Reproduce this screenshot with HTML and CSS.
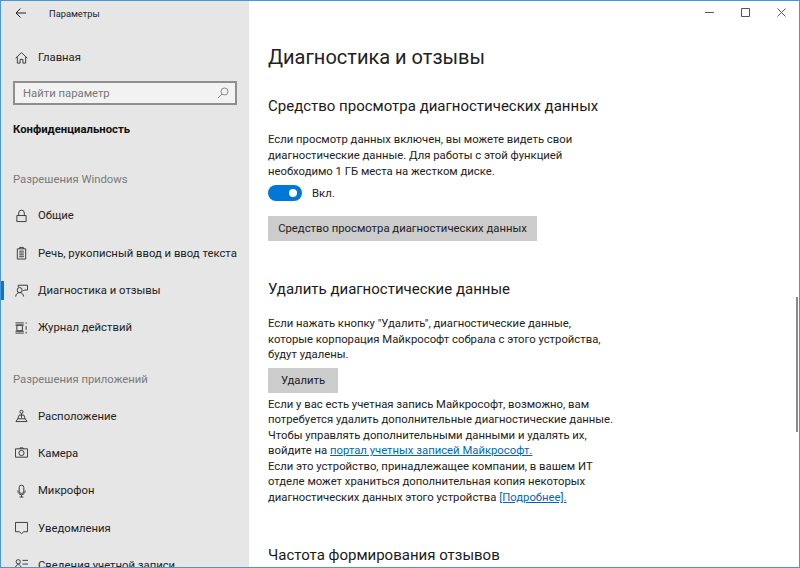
FILE: index.html
```html
<!DOCTYPE html>
<html lang="ru">
<head>
<meta charset="utf-8">
<title>Параметры</title>
<link rel="stylesheet" href="styles.css">
</head>
<body>
<div class="window">
  <aside class="sidebar">
    <div class="titlebar">
      <svg class="back" viewBox="0 0 12 12"><path d="M11 6H1M5.500 1.500 1 6l4.500 4.500"/></svg>
      <span class="app-title">Параметры</span>
    </div>
    <a class="nav-item home">
      <svg class="icon" viewBox="0 0 14 14"><path d="M.7 7.200 7 1.200l6.300 6M2.500 5.800v6.700h3V8.500h3v4h3V5.800"/></svg>
      <span>Главная</span>
    </a>
    <div class="search"><span>Найти параметр</span>
      <svg class="search-icon" viewBox="0 0 12 12"><circle cx="7.500" cy="4.500" r="3.500"/><path d="M5 7 1 11"/></svg>
    </div>
    <div class="category">Конфиденциальность</div>
    <div class="group first">Разрешения Windows</div>
    <a class="nav-item">
      <svg class="icon" viewBox="0 0 14 14"><path d="M2 6.500h10v6.500H2zM4 6.500V3.700a3 3 0 0 1 6 0v2.800"/></svg>
      <span>Общие</span>
    </a>
    <a class="nav-item">
      <svg class="icon" viewBox="0 0 14 14"><path d="M2.500 2.500h9v11h-9zM5 2.500V1h4v1.500M4.500 5h5M4.500 7h5M4.500 9h5M4.500 11h5"/></svg>
      <span>Речь, рукописный ввод и ввод текста</span>
    </a>
    <a class="nav-item active">
      <svg class="icon" viewBox="0 0 14 14"><circle cx="5" cy="6" r="2.700"/><path d="M.7 13c.3-2.800 2-4.300 4.300-4.300S9 10.200 9.300 13M3.500 3V.8h10V6H9.800l-1.300 1.300"/></svg>
      <span>Диагностика и отзывы</span>
    </a>
    <a class="nav-item">
      <svg class="icon" viewBox="0 0 14 14"><path d="M.5 1.500h9M.5 12.500h9M2 4h6v6H2zM.5 10.500h9M.5 3.800h9M12 1v1.500M12 5v4M12 11v2"/></svg>
      <span>Журнал действий</span>
    </a>
    <div class="group second">Разрешения приложений</div>
    <a class="nav-item">
      <svg class="icon" viewBox="0 0 14 14"><circle cx="7" cy="2.500" r="1.700"/><path d="M7 4.200V9M4.500 6h5l1.500 4H3zM3 10l-2 3h12l-2-3"/></svg>
      <span>Расположение</span>
    </a>
    <a class="nav-item">
      <svg class="icon" viewBox="0 0 14 14"><path d="M.5 2.500h13v9H.5z"/><circle cx="7" cy="7" r="2.800"/><path d="M4.500 2.500l.7-1h3.600l.7 1"/></svg>
      <span>Камера</span>
    </a>
    <a class="nav-item">
      <svg class="icon" viewBox="0 0 14 14"><rect x="4.500" y=".7" width="5" height="9" rx="2.500"/><path d="M3 6.500c0 6 8 6 8 0M7 11.500V13.500M5 13.500h4"/></svg>
      <span>Микрофон</span>
    </a>
    <a class="nav-item">
      <svg class="icon" viewBox="0 0 14 14"><path d="M.5 1h13v10H9.500L7 13l-2.500-2H.5z"/></svg>
      <span>Уведомления</span>
    </a>
    <a class="nav-item">
      <svg class="icon" viewBox="0 0 14 14"><circle cx="3.500" cy="3.500" r="2.300"/><path d="M.5 11c0-3 1.200-4.500 3-4.500s3 1.500 3 4.500zM8 2h6M8 6h6M8 10h6"/></svg>
      <span>Сведения учетной записи</span>
    </a>
  </aside>
  <main class="content">
    <div class="controls">
      <svg class="ctl" viewBox="0 0 9 9"><path d="M0 4.500h9"/></svg>
      <svg class="ctl" viewBox="0 0 9 9"><path d="M.5.500h8v8h-8z"/></svg>
      <svg class="ctl" viewBox="0 0 9 9"><path d="M.5.500l8 8M8.500.500l-8 8"/></svg>
    </div>
    <h1>Диагностика и отзывы</h1>
    <h2 class="h-viewer">Средство просмотра диагностических данных</h2>
    <p class="intro">Если просмотр данных включен, вы можете видеть свои<br>диагностические данные. Для работы с этой функцией<br>необходимо 1 ГБ места на жестком диске.</p>
    <div class="toggle-row"><span class="toggle"><span class="knob"></span></span><span>Вкл.</span></div>
    <button class="btn wide">Средство просмотра диагностических данных</button>
    <h2 class="h-delete">Удалить диагностические данные</h2>
    <p class="intro-second">Если нажать кнопку "Удалить", диагностические данные,<br>которые корпорация Майкрософт собрала с этого устройства,<br>будут удалены.</p>
    <button class="btn narrow">Удалить</button>
    <p class="note">Если у вас есть учетная запись Майкрософт, возможно, вам<br>потребуется удалить дополнительные диагностические данные.<br>Чтобы управлять дополнительными данными и удалять их,<br>войдите на <a class="link">портал учетных записей Майкрософт.</a><br>Если это устройство, принадлежащее компании, в вашем ИТ<br>отделе может храниться дополнительная копия некоторых<br>диагностических данных этого устройства <a class="link">[Подробнее].</a></p>
    <h2 class="h-freq">Частота формирования отзывов</h2>
    <span class="scrollbar"></span>
  </main>
</div>
</body>
</html>
```
FILE: styles.css
```css
* { box-sizing: border-box; }
html, body { margin: 0; height: 100%; overflow: hidden; }
body { font-family: Roboto, "Open Sans", sans-serif; color: #1a1a1a; background: #fff; }
.window { width: 800px; height: 568px; border: 1px solid #4a97d8; display: flex; overflow: hidden; }
.sidebar { width: 248px; flex: none; height: 566px; background: #e6e6e6; overflow: hidden; font-size: 11.300px; }
.titlebar { height: 24px; display: flex; align-items: center; padding-left: 14px; }
.back { width: 12px; height: 12px; fill: none; stroke: #222; stroke-width: 1; }
.app-title { margin-left: 22px; font-size: 9.300px; color: #222; }
.nav-item { display: flex; align-items: center; height: 37.300px; padding-left: 14px; color: #222; position: relative; }
.nav-item span { margin-left: 10px; white-space: nowrap; }
.home { margin-top: 14px; }
.icon { width: 13px; height: 14px; flex: none; fill: none; stroke: #333; stroke-width: 1; }
.active::before { content: ""; position: absolute; left: 0; top: 9px; width: 3px; height: 19px; background: #0078d7; }
.search { margin: 5px 0 0 12px; width: 224px; height: 24px; border: 2px solid #8f8f8f; background: #f2f2f2; display: flex; align-items: center; justify-content: space-between; padding: 0 6px 0 8px; color: #777; }
.search-icon { width: 12px; height: 12px; fill: none; stroke: #888; stroke-width: 1; }
.category { margin: 16px 0 0 12px; font-weight: 700; color: #111; line-height: 18px; }
.group { margin-left: 12px; color: #7a7a7a; line-height: 18px; }
.first { margin-top: 32px; margin-bottom: 8px; }
.second { margin-top: 25px; margin-bottom: 8px; }
.content { flex: 1; position: relative; padding-left: 19px; overflow: hidden; font-size: 11.300px; color: #222; }
.controls { position: absolute; top: 7px; right: 13px; display: flex; gap: 27px; }
.ctl { width: 9px; height: 9px; fill: none; stroke: #555; stroke-width: 1; }
h1 { margin: 40px 0 0; font-size: 20px; font-weight: 400; line-height: 32px; color: #222; }
h2 { margin: 0; font-size: 15px; font-weight: 400; line-height: 20px; color: #1a1a1a; white-space: nowrap; }
.h-viewer { margin-top: 23px; }
.intro { margin: 16px 0 0; line-height: 16px; white-space: nowrap; }
.toggle-row { display: flex; align-items: center; gap: 10px; margin-top: 4px; height: 18px; }
.toggle { width: 34px; height: 16px; border-radius: 8px; background: #0078d7; position: relative; flex: none; }
.knob { position: absolute; right: 5px; top: 4px; width: 8px; height: 8px; border-radius: 50%; background: #fff; }
.btn { display: block; border: 0; background: #cccccc; font: inherit; color: #222; height: 25px; padding: 0; white-space: nowrap; }
.wide { width: 269px; margin-top: 14px; }
.h-delete { margin-top: 38px; }
.intro-second { margin: 17px 0 0; line-height: 15.500px; white-space: nowrap; }
.narrow { width: 70px; margin-top: 5px; }
.note { margin: 4px 0 0; line-height: 15.600px; white-space: nowrap; }
.link { color: #0067c0; text-decoration: underline; }
.h-freq { margin-top: 39px; }
.scrollbar { position: absolute; right: 1px; top: 296px; width: 2px; height: 135px; background: #8a8a8a; }
```
